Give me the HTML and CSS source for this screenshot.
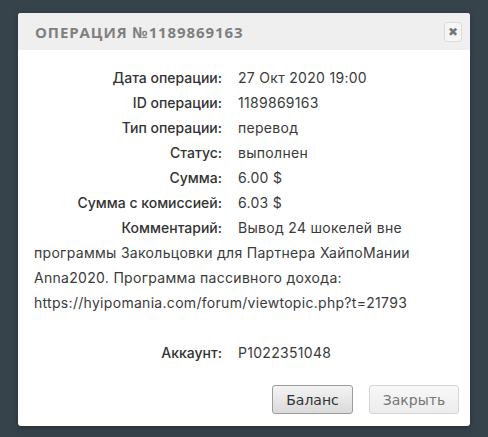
FILE: index.html
```
<!DOCTYPE html>
<html lang="ru">
<head>
    <meta charset="UTF-8">
    <title>Операция №1189869163</title>
    <link rel="stylesheet" href="styles.css">
</head>
<body>
    <div class="dialog">
        <div class="dialog-head">
            <span class="dialog-title">Операция №1189869163</span>
            <button class="close-btn">&#10006;</button>
        </div>
        <div class="dialog-body">
            <div class="row"><span class="label">Дата операции:</span>27 Окт 2020 19:00</div>
            <div class="row"><span class="label">ID операции:</span>1189869163</div>
            <div class="row"><span class="label">Тип операции:</span>перевод</div>
            <div class="row"><span class="label">Статус:</span>выполнен</div>
            <div class="row"><span class="label">Сумма:</span>6.00 $</div>
            <div class="row"><span class="label">Сумма с комиссией:</span>6.03 $</div>
            <div class="row"><span class="label">Комментарий:</span>Вывод 24 шокелей вне программы Закольцовки для Партнера ХайпоМании Anna2020. Программа пассивного дохода: https://hyipomania.com/forum/viewtopic.php?t=21793</div>
            <div class="row account"><span class="label">Аккаунт:</span>P1022351048</div>
        </div>
        <div class="dialog-foot">
            <button class="btn btn-main">Баланс</button>
            <button class="btn btn-light">Закрыть</button>
        </div>
    </div>
</body>
</html>
```

FILE: styles.css
```
body {
    margin: 0;
    padding: 13px 0 0 18px;
    background-color: #37434b;
    font-family: Inter, sans-serif;
    height: 437px;
    box-sizing: border-box;
    overflow: hidden;
}
.dialog {
    width: 452px;
    background: white;
    border-radius: 3px;
    box-shadow: 0 2px 6px rgba(0,0,0,0.3);
}
.dialog-head {
    height: 37px;
    background: #efefef;
    display: flex;
    align-items: center;
    justify-content: space-between;
    padding: 0 8px 0 17px;
    border-radius: 3px 3px 0 0;
}
.dialog-title {
    text-transform: uppercase;
    font-family: "Open Sans", sans-serif;
    font-weight: bold;
    font-size: 15px;
    letter-spacing: 0.9px;
    color: #7f7f7f;
}
.close-btn {
    width: 18px;
    height: 20px;
    padding: 0;
    background: #f6f6f6;
    border: 1px solid #dcdcdc;
    border-radius: 3px;
    color: #777;
    font-size: 12px;
    font-weight: bold;
    line-height: 18px;
    font-family: "DejaVu Sans", sans-serif;
}
.dialog-body {
    padding: 15px 30px 0 16px;
    font-size: 14px;
    line-height: 25px;
    color: #3a3a3a;
}
.row {
    letter-spacing: 0.3px;
}
.label {
    display: inline-block;
    width: 188px;
    margin-right: 16px;
    text-align: right;
    font-weight: 500;
    letter-spacing: 0;
    color: #333;
}
.account {
    margin-top: 25px;
}
.dialog-foot {
    display: flex;
    justify-content: flex-end;
    gap: 16px;
    padding: 20px 11px 12px 0;
}
.btn {
    height: 29px;
    border-radius: 3px;
    font-family: "DejaVu Sans", sans-serif;
    font-size: 14px;
    cursor: pointer;
}
.btn-main {
    width: 81px;
    background: linear-gradient(#f4f4f4, #dadada);
    border: 1px solid #9c9c9c;
    color: #333;
}
.btn-light {
    width: 90px;
    background: linear-gradient(#f8f8f8, #ececec);
    border: 1px solid #d6d6d6;
    color: #777;
}
```
